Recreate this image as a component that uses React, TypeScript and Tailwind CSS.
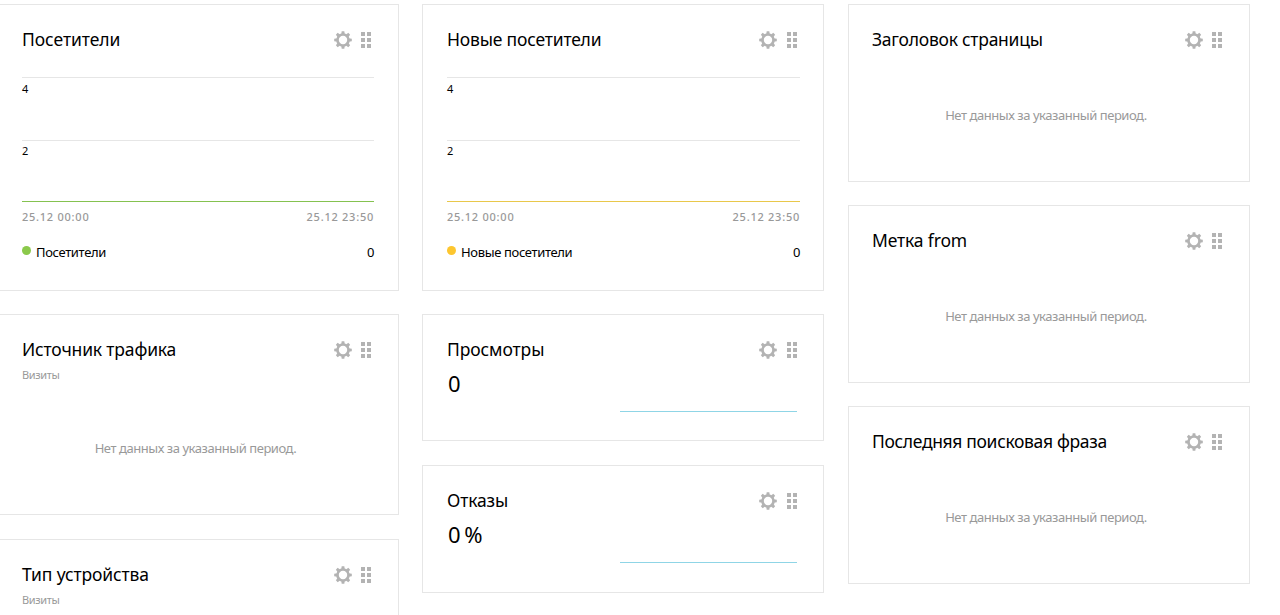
import type { ReactNode } from "react";
import clsx from "clsx";

const teeth = [0, 45, 90, 135, 180, 225, 270, 315];

function GearIcon() {
  return (
    <svg width="18" height="18" viewBox="0 0 18 18" className="text-[#b3b3b3]" aria-hidden="true">
      <circle cx="9" cy="9" r="5.5" fill="none" stroke="currentColor" strokeWidth="2.6" />
      {teeth.map((angle) => (
        <path key={angle} d="M7.2 3.4 L7.7 0.2 H10.3 L10.8 3.4 Z" fill="currentColor" transform={`rotate(${angle} 9 9)`} />
      ))}
    </svg>
  );
}

function DragIcon() {
  return (
    <div className="grid grid-cols-2 gap-0.5">
      {[0, 1, 2, 3, 4, 5].map((i) => (
        <span key={i} className="size-1 bg-[#b3b3b3]" />
      ))}
    </div>
  );
}

type WidgetProps = {
  title: string;
  titleClass: string;
  className: string;
  subtitle?: string;
  children?: ReactNode;
};

function Widget({ title, titleClass, className, subtitle, children }: WidgetProps) {
  return (
    <section className={clsx("flex shrink-0 flex-col border border-[#e6e6e6] pt-[23px]", className)}>
      <header className="flex h-6 shrink-0 items-center justify-between">
        <h2 className={clsx("mb-0.5 text-[17.5px] leading-6 whitespace-nowrap", titleClass)}>{title}</h2>
        <div className="flex items-center gap-[9px] pr-[3px]">
          <GearIcon />
          <DragIcon />
        </div>
      </header>
      {subtitle && <p className="mt-[5px] h-4 shrink-0 text-[11px] leading-4 tracking-[-0.35px] text-[#999]">{subtitle}</p>}
      {children}
    </section>
  );
}

function NoData({ className }: { className: string }) {
  return (
    <p className={clsx("pr-[5px] text-center text-[13px] leading-5 tracking-[-0.45px] whitespace-nowrap text-[#999]", className)}>
      Нет данных за указанный период.
    </p>
  );
}

type ChartProps = { label: string; lineClass: string; dotClass: string };

function Chart({ label, lineClass, dotClass }: ChartProps) {
  return (
    <>
      <div className="mt-[25px] text-[11px] leading-4">
        <div className="h-[63px] border-t border-[#e6e6e6] pt-[3px]">4</div>
        <div className="h-[61px] border-t border-[#e6e6e6] pt-0.5">2</div>
      </div>
      <div className={clsx("h-px", lineClass)} />
      <div className="mt-[7px] flex justify-between text-[11px] leading-4 font-medium tracking-[0.75px] text-[#999]">
        <span>25.12 00:00</span>
        <span>25.12 23:50</span>
      </div>
      <div className="mt-[17px] flex h-5 items-center text-[13px] leading-5 tracking-[-0.35px]">
        <span className={clsx("mr-1.5 mb-1 size-2.25 rounded-full", dotClass)} />
        <span className="-ml-px">{label}</span>
        <span className="ml-auto">0</span>
      </div>
    </>
  );
}

function Metric({ value }: { value: string }) {
  return (
    <>
      <div className="mt-[7px] h-7 pl-px text-[22px] leading-7 tracking-[-1px]">{value}</div>
      <div className="mt-3.5 mr-[3px] h-px w-[177px] self-end bg-[#8fd5e6]" />
    </>
  );
}

export default function App() {
  return (
    <main className="h-[615px] overflow-hidden bg-white font-['Noto_Sans',sans-serif] text-black">
      <div className="-ml-[3px] flex pt-1">
        <div className="mr-[23px] flex w-[402px] shrink-0 flex-col gap-6">
          <Widget title="Посетители" titleClass="tracking-[-0.05px]" className="h-[287px] px-6">
            <Chart label="Посетители" lineClass="bg-[#85c250]" dotClass="bg-[#8bc94b]" />
          </Widget>
          <Widget title="Источник трафика" titleClass="tracking-[-0.16px]" className="-mt-px h-[201px] px-6" subtitle="Визиты">
            <NoData className="mt-[55px]" />
          </Widget>
          <Widget title="Тип устройства" titleClass="tracking-[-0.12px]" className="h-[201px] px-6" subtitle="Визиты" />
        </div>

        <div className="mr-6 flex w-[402px] shrink-0 flex-col gap-6 [&_svg]:mr-px">
          <Widget title="Новые посетители" titleClass="tracking-[-0.19px]" className="h-[287px] pr-[23px] pl-6">
            <Chart label="Новые посетители" lineClass="bg-[#e9c84b]" dotClass="bg-[#fdc62f]" />
          </Widget>
          <Widget title="Просмотры" titleClass="tracking-[-0.1px]" className="-mt-px h-[127px] pr-[23px] pl-6">
            <Metric value="0" />
          </Widget>
          <Widget title="Отказы" titleClass="tracking-[-0.15px]" className="h-[128px] pr-[23px] pl-6">
            <Metric value="0 %" />
          </Widget>
        </div>

        <div className="flex w-[402px] shrink-0 flex-col gap-[23px]">
          <Widget title="Заголовок страницы" titleClass="tracking-[-0.25px]" className="h-[178px] pr-6 pl-[23px]">
            <NoData className="mt-[53px]" />
          </Widget>
          <Widget title="Метка from" titleClass="tracking-[-0.15px]" className="h-[178px] pr-6 pl-[23px]">
            <NoData className="mt-[53px]" />
          </Widget>
          <Widget title="Последняя поисковая фраза" titleClass="tracking-[-0.34px]" className="h-[178px] pr-6 pl-[23px]">
            <NoData className="mt-[53px]" />
          </Widget>
        </div>
      </div>
    </main>
  );
}
